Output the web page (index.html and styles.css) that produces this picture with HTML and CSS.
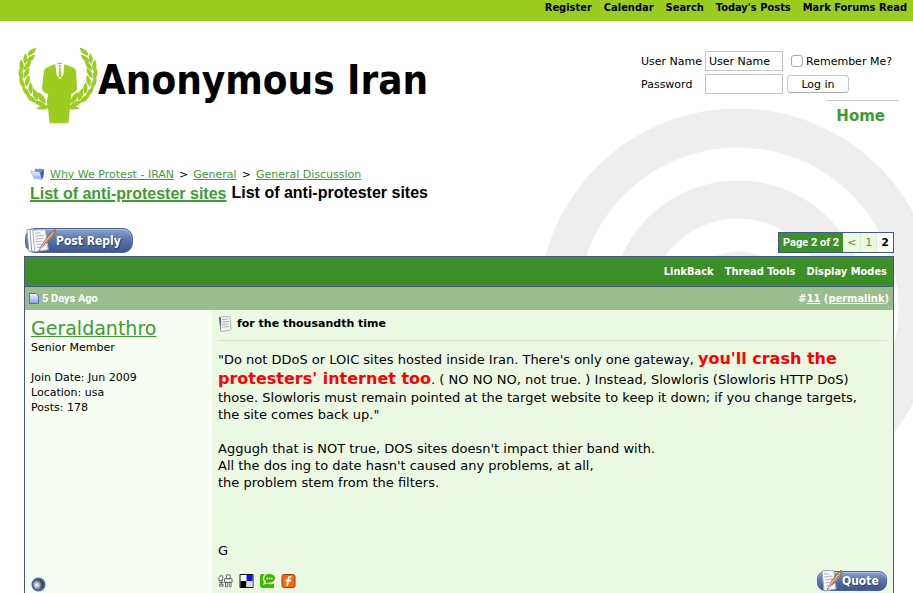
FILE: index.html
```html
<!DOCTYPE html>
<html lang="en">
<head>
<meta charset="utf-8">
<title>List of anti-protester sites - Anonymous Iran</title>
<link rel="stylesheet" href="styles.css">
</head>
<body>
<nav class="topbar">
  <a href="#">Register</a><a href="#">Calendar</a><a href="#">Search</a><a href="#">Today's Posts</a><a href="#">Mark Forums Read</a>
</nav>
<header class="header">
  <a class="brand" href="#">
    <svg class="logo" viewBox="54 138 240 237" aria-hidden="true">
      <defs>
        <path id="leaf" d="M0 2C-9-8-8-22 1-34C9-22 8-8 0 2Z"/>
        <g id="branch">
          <use href="#leaf" transform="translate(84 166) rotate(46)"/>
          <use href="#leaf" transform="translate(75 190) rotate(2) scale(.9)"/>
          <use href="#leaf" transform="translate(80 186) rotate(48)"/>
          <use href="#leaf" transform="translate(67 212) rotate(-8)"/>
          <use href="#leaf" transform="translate(73 209) rotate(36)"/>
          <use href="#leaf" transform="translate(66 237) rotate(-14)"/>
          <use href="#leaf" transform="translate(72 233) rotate(26)"/>
          <use href="#leaf" transform="translate(73 263) rotate(-26)"/>
          <use href="#leaf" transform="translate(79 258) rotate(12)"/>
          <use href="#leaf" transform="translate(88 287) rotate(-40)"/>
          <use href="#leaf" transform="translate(93 281) rotate(-5)"/>
          <use href="#leaf" transform="translate(108 306) rotate(-54) scale(1.1)"/>
          <use href="#leaf" transform="translate(112 300) rotate(-20) scale(1.1)"/>
          <use href="#leaf" transform="translate(136 317) rotate(-70) scale(1.1)"/>
          <use href="#leaf" transform="translate(136 309) rotate(-38) scale(1.2)"/>
          <path d="M108 325q18-11 37-9l-3 10q-16 6-34-1Z"/>
        </g>
      </defs>
      <g fill="#9acd20">
        <use href="#branch"/>
        <use href="#branch" transform="translate(348 0) scale(-1 1)"/>
        <path d="M164 193L139 203Q132 206 131 219L126 266Q128 277 145 282L140 307L145 333L149 371H205L211 312L214 282Q232 274 231 264L228 213Q227 205 218 202L193 193Z"/>
      </g>
      <path fill="#fff" d="M166 192L193 192L190 224L180 238L170 226Z"/>
      <path fill="#9acd20" d="M172 188h14v4h-14ZM176 195h7l-2 6 3 28-4 6-4-6 2-28Z"/>
      <path d="M147 369q27 4 60 0" fill="none" stroke="#fff" stroke-width="2"/>
    </svg>
    <span>Anonymous Iran</span>
  </a>
  <div class="account">
    <form class="login">
      <label for="user">User Name</label>
      <input class="field" id="user" type="text" value="User Name">
      <span class="remember"><input id="remember" type="checkbox"><label for="remember">Remember Me?</label></span>
      <label for="password">Password</label>
      <input class="field" id="password" type="password">
      <button class="submit" type="button">Log in</button>
    </form>
    <a class="home" href="#">Home</a>
  </div>
</header>
<main class="page">
  <div class="crumbs">
    <svg class="folder" viewBox="0 0 16 14" aria-hidden="true"><path d="M4 5L6 1L9 2L10 1L15 2L14 11L12 13Z" fill="#6c90dc"/><path d="M15 2L14 11L12 13L11 6Z" fill="#3c60b8"/><path d="M0 3L10 5L13 13L4 12Z" fill="#a3bdf5"/><path d="M1 4L10 5L11 9L3 8Z" fill="#cfdefc"/></svg>
    <a href="#">Why We Protest - IRAN</a> <span>&gt;</span> <a href="#">General</a> <span>&gt;</span> <a href="#">General Discussion</a>
  </div>
  <h1 class="title"><a href="#">List of anti-protester sites</a> <span>List of anti-protester sites</span></h1>
  <div class="tools">
    <button class="pill reply" type="button">
      <svg viewBox="0 0 31 26" aria-hidden="true"><path d="M1 1l5 0 1 23-4 0Z" fill="#fff" stroke="#98a1b5"/><path d="M4 1l6 0 1 22-5 1Z" fill="#fff" stroke="#8b96af"/><path d="M7 2l13-1 3 21-14 2Z" fill="#f7f8fb" stroke="#a5aebf"/><path d="M9 5l6-.5M9.500 8l9-1M10 11l8-1M10 14l7-1M11 17l6-1M11 20l6-1" stroke="#8d94a0" stroke-width=".7"/><path d="M13 24Q17 13 30 1Q31 7 22 14L15 21Z" fill="#c58e62" stroke="#7c563c" stroke-width=".7"/><path d="M14 22Q20 12 28 4" fill="none" stroke="#f3c99d"/></svg>
      <span>Post Reply</span>
    </button>
    <div class="pager"><strong>Page 2 of 2</strong><a href="#">&lt;</a><a href="#">1</a><b>2</b></div>
  </div>
  <section class="thread">
    <div class="menu"><a href="#">LinkBack</a><a href="#">Thread Tools</a><a href="#">Display Modes</a></div>
    <article>
      <div class="datebar">
        <svg class="doc" viewBox="0 0 10 11" aria-hidden="true"><defs><linearGradient id="docfill" x2="0" y2="1"><stop stop-color="#f1f5ff"/><stop offset="1" stop-color="#86a2e5"/></linearGradient></defs><path d="M.5.5H7L9.500 3V10.500H.5Z" fill="url(#docfill)" stroke="#5670a8"/></svg>
        <span>5 Days Ago</span>
        <span class="number">#<a href="#">11</a> (<a href="#">permalink</a>)</span>
      </div>
      <div class="post">
        <aside class="author">
          <a class="name" href="#">Geraldanthro</a>
          <div>Senior Member</div>
          <div class="facts"><div>Join Date: Jun 2009</div><div>Location: usa</div><div>Posts: 178</div></div>
          <svg class="status" viewBox="0 0 15 15" role="img" aria-label="Offline"><defs><radialGradient id="orb" cx=".35" cy=".55"><stop stop-color="#fff"/><stop offset=".5" stop-color="#aaa"/><stop offset="1" stop-color="#333"/></radialGradient></defs><circle cx="7.500" cy="7.500" r="6" fill="url(#orb)" stroke="#4468bf" stroke-width="2"/></svg>
        </aside>
        <div class="content">
          <h2 class="subject">
            <svg viewBox="0 0 14 16" aria-hidden="true"><path d="M1 1l10-.5q2 0 1 2l1 11q-1 2-3 1l-7 1Z" fill="#f4f4f8" stroke="#a4a4b0" stroke-width=".8"/><path d="M1 1l2 1 0 13Z" fill="#555862"/><path d="M4 3.500l6-.5M4 6l7-.5M4 8.500l6-.5M4 11l7-.5" stroke="#9a9aa4" stroke-width=".8"/></svg>
            for the thousandth time
          </h2>
          <div class="message">
            <p>"Do not DDoS or LOIC sites hosted inside Iran. There's only one gateway, <strong>you'll crash the protesters' internet too</strong>. ( NO NO NO, not true. ) Instead, Slowloris (Slowloris HTTP DoS) those. Slowloris must remain pointed at the target website to keep it down; if you change targets, the site comes back up."</p>
            <p>Aggugh that is NOT true, DOS sites doesn't impact thier band with.<br>All the dos ing to date hasn't caused any problems, at all,<br>the problem stem from the filters.</p>
            <p class="sign">G</p>
          </div>
          <div class="actions">
            <a href="#" aria-label="Digg"><svg viewBox="0 0 16 14"><path d="M2 1.500h3v5H1v-3l1-1ZM9 .5h4v4H9ZM7 4.500h8v4H7ZM1 8.500h5M3.500 6.500v4M1.500 10.500h4v2h-4ZM8 8.500h2v4.500H8ZM12 8.500h2v4.500h-2Z" fill="#f4f4f0" stroke="#555" stroke-width=".9"/></svg></a>
            <a href="#" aria-label="Delicious"><svg viewBox="0 0 14 14"><path d="M.5.5h13v13H.5Z" fill="#fff" stroke="#111"/><path d="M7 1h6v6H7Z" fill="#1212e5"/><path d="M1 7h6v6H1Z"/><path d="M7 7h6v6H7Z" fill="#ddd"/></svg></a>
            <a href="#" aria-label="Technorati"><svg viewBox="0 0 15 14"><path d="M2 0H5Q1 4 4 8L3 11L7 9.500Q11 11 14 9.500V14H3Q0 14 0 11V2Q0 0 2 0Z" fill="#43b500"/><path d="M9 0Q15 0 15 4.500Q14 9 9 8.500L5.500 9.500L6 7.500Q3 5 5 2Q6 0 9 0Z" fill="#43b500"/><path d="M6.500 4.500h6" stroke="#fff" stroke-width="1.600" stroke-dasharray="1.500 .7"/></svg></a>
            <a href="#" aria-label="Furl"><svg viewBox="0 0 14 14"><rect x=".5" y=".5" width="13" height="13" rx="2" fill="#f26a09" stroke="#9e3b0d"/><path d="M10 3Q7 2 7 5L5.500 12M4 6.500h5.500" fill="none" stroke="#fff" stroke-width="1.800"/></svg></a>
            <button class="pill quote" type="button">
              <svg viewBox="0 0 24 22" aria-hidden="true"><path d="M4 1l12-1 2 19-12 2Z" fill="#f9fafc" stroke="#9aa4b7"/><path d="M6 4h5M6 7l8-1M7 10l7-1M7 13l5-1M8 16l5-1" stroke="#8b94a7" stroke-width=".7"/><path d="M9 20Q13 9 23 0Q25 5 18 12L11 17Z" fill="#c58e62" stroke="#7c563c" stroke-width=".7"/><path d="M10 18Q15 9 22 3" fill="none" stroke="#f3c99d"/></svg>
              <span>Quote</span>
            </button>
          </div>
        </div>
      </div>
    </article>
  </section>
</main>
</body>
</html>
```
FILE: styles.css
```css
* { box-sizing: border-box; }

body {
  margin: 0;
  font: 11px/15px Verdana, "DejaVu Sans", sans-serif;
  color: #000;
  background: radial-gradient(circle at calc(100% - 175px) 308px,
    #eee 56px, #fff 57px, #fff 89px, #eee 90px, #eee 127px,
    #fff 128px, #fff 160px, #eee 161px, #eee 199px, #fff 200px) no-repeat;
}

a { color: #3f9c35; }
h1, h2, p { margin: 0; }
button, input { font: inherit; }

.topbar {
  display: flex;
  justify-content: flex-end;
  gap: 12px;
  height: 21px;
  padding-right: 6px;
  background: #9acd20;
  font: bold 11px/15px "DejaVu Sans Condensed", "DejaVu Sans", sans-serif;
}
.topbar a { color: #000; text-decoration: none; }

.header {
  display: flex;
  justify-content: space-between;
  height: 145px;
  padding: 25px 14px 0 18px;
}
.brand {
  display: flex;
  height: 80px;
  color: #000;
  font: bold 40px/68px "DejaVu Sans Condensed", "DejaVu Sans", sans-serif;
  text-decoration: none;
  white-space: nowrap;
}
.logo { width: 80px; height: 79px; }

.account { display: flex; flex-direction: column; align-items: flex-end; padding-top: 5px; }
.login {
  display: grid;
  grid-template-columns: 64px 78px auto;
  gap: 3px 0;
  align-items: center;
  padding-right: 7px;
}
.login label { white-space: nowrap; }
.field {
  width: 78px;
  height: 20px;
  padding: 0 3px;
  border: 1px solid #c6c6c6;
  background: #fff;
}
.remember { display: flex; align-items: center; gap: 3px; padding-left: 8px; }
.remember input {
  appearance: none;
  width: 12px;
  height: 12px;
  margin: 0;
  border: 1px solid #aaa;
  border-radius: 3px;
  background: #fff;
}
.submit {
  justify-self: start;
  width: 62px;
  height: 18px;
  margin-left: 4px;
  padding: 0;
  border: 1px solid #c8c8c8;
  border-bottom-color: #aaa;
  border-radius: 4px;
  background: #fff;
}
.home {
  margin-top: 6px;
  padding: 5px 14px 0 9px;
  border-top: 1px solid #ccc;
  font: bold 15px/20px Verdana, "DejaVu Sans", sans-serif;
  text-decoration: none;
}

.page { padding: 0 19px 0 24px; }
.crumbs { display: flex; align-items: center; gap: 5px; height: 16px; margin-left: 6px; }
.folder { width: 15px; height: 14px; }
.title {
  display: flex;
  gap: 5px;
  margin-left: 6px;
  font: bold 16px/22px "Liberation Sans", Arial, sans-serif;
}
.title a { padding-top: 2px; line-height: 20px; text-decoration-thickness: 2px; }

.tools { display: flex; justify-content: space-between; align-items: flex-end; height: 52px; padding-bottom: 3px; }
.pill {
  display: flex;
  align-items: center;
  padding: 0;
  border: 1px solid #4c6498;
  background: linear-gradient(#8ba1cc, #5877ad 45%, #3e568c);
  box-shadow: inset 0 1px 1px #b3c3e1;
  color: #fff;
  font: bold 12px/16px "DejaVu Sans Condensed", "DejaVu Sans", sans-serif;
  text-shadow: 1px 1px 1px #263c68;
}
.reply { width: 108px; height: 25px; margin-left: 1px; border-radius: 10px; }
.reply svg { width: 30px; height: 26px; flex: none; }
.pager {
  display: flex;
  height: 21px;
  border: 1px solid #44568b;
  font: 11px/19px Verdana, "DejaVu Sans", sans-serif;
  background: #f7fdf2;
}
.pager > * { padding: 0 4px; }
.pager strong { color: #fff; background: #3c8f28; font: bold 11px/20px Roboto, sans-serif; }
.pager a { background: #ebf9e3; border-right: 1px solid #e0e9dc; text-decoration: none; }

.thread { border: 1px solid #44568b; }
.menu {
  display: flex;
  justify-content: flex-end;
  gap: 11px;
  height: 30px;
  padding-right: 6px;
  border-bottom: 1px solid #44568b;
  background: #3c8f28;
  font: bold 11px/30px "DejaVu Sans Condensed", "DejaVu Sans", sans-serif;
}
.menu a { color: #fff; text-decoration: none; }
.datebar {
  display: flex;
  align-items: center;
  gap: 3px;
  height: 23px;
  padding: 0 4px;
  background: #98be8e;
  color: #fff;
  font: bold 11px/23px Roboto, sans-serif;
}
.datebar a { color: #fff; }
.doc { width: 10px; height: 11px; }
.number { margin-left: auto; font-family: "DejaVu Sans Condensed", "DejaVu Sans", sans-serif; }

.post { display: grid; grid-template-columns: 187px 1fr; }
.author { display: flex; flex-direction: column; align-items: flex-start; padding: 6px; background: #f7fdf2; }
.name { font-size: 19px; line-height: 24px; }
.facts { margin-top: 15px; }
.status { width: 15px; height: 15px; margin-top: auto; }
.content { padding: 6px; background: #ebf9e3; }
.subject {
  display: flex;
  align-items: center;
  gap: 5px;
  padding-bottom: 8px;
  border-bottom: 1px solid #dcdcdc;
  font: bold 11px/16px "DejaVu Sans", sans-serif;
}
.subject svg { width: 14px; height: 16px; }
.message { padding: 8px 6px 0 0; font-size: 13px; line-height: 17px; }
.message p { margin-bottom: 17px; }
.message strong { color: #f00; font-size: 16px; line-height: 20px; }
.message .sign { margin: 51px 0 0; }
.actions { display: flex; align-items: center; gap: 6px; height: 22px; margin-top: 11px; }
.actions a { display: flex; }
.actions a svg { width: 15px; height: 14px; }
.quote { width: 70px; height: 20px; margin-left: auto; border-radius: 8px; }
.quote svg { width: 24px; height: 22px; flex: none; }
```
